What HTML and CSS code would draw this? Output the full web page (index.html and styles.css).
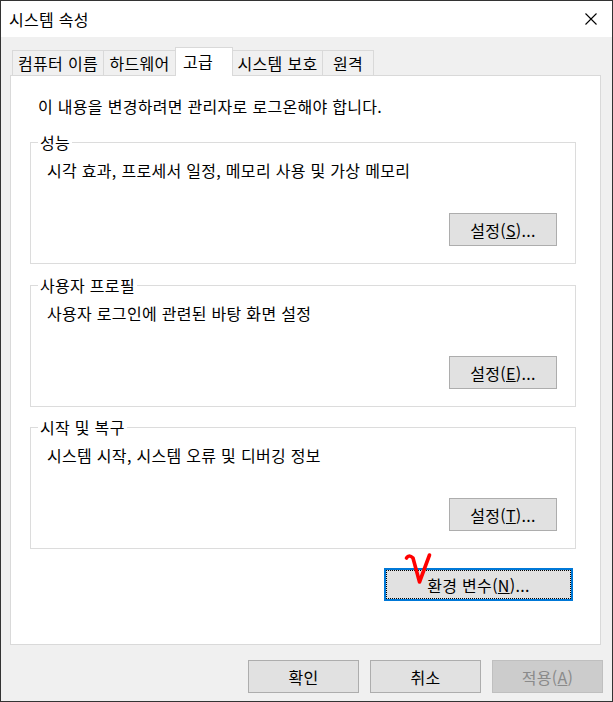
FILE: index.html
```html
<!DOCTYPE html>
<html lang="ko">
<head>
<meta charset="utf-8">
<title>시스템 속성</title>
<link rel="stylesheet" href="styles.css">
</head>
<body>
<div class="window">
  <div class="titlebar">
    <span class="title">시스템 속성</span>
    <svg class="close" width="12" height="12" viewBox="0 0 12 12"><path d="M0.5 0.5 L11.5 11.5 M11.5 0.5 L0.5 11.5" stroke="#000" stroke-width="1.1" fill="none"/></svg>
  </div>
  <div class="client">
    <div class="tabs">
      <div class="tab t1">컴퓨터 이름</div>
      <div class="tab t2">하드웨어</div>
      <div class="tab t3 active">고급</div>
      <div class="tab t4">시스템 보호</div>
      <div class="tab t5">원격</div>
    </div>
    <div class="panel">
      <div class="intro">이 내용을 변경하려면 관리자로 로그온해야 합니다.</div>
      <div class="group g1">
        <div class="group-title">성능</div>
        <div class="group-desc">시각 효과, 프로세서 일정, 메모리 사용 및 가상 메모리</div>
        <div class="group-actions"><button class="btn btn-set">설정(<u>S</u>)...</button></div>
      </div>
      <div class="group g2">
        <div class="group-title">사용자 프로필</div>
        <div class="group-desc">사용자 로그인에 관련된 바탕 화면 설정</div>
        <div class="group-actions"><button class="btn btn-set">설정(<u>E</u>)...</button></div>
      </div>
      <div class="group g3">
        <div class="group-title">시작 및 복구</div>
        <div class="group-desc">시스템 시작, 시스템 오류 및 디버깅 정보</div>
        <div class="group-actions"><button class="btn btn-set">설정(<u>T</u>)...</button></div>
      </div>
      <div class="env-row">
        <button class="btn btn-default"><span class="focus">환경 변수(<u>N</u>)...</span></button>
        <svg class="mark" width="32" height="36" viewBox="0 0 32 36"><path d="M4.5 8 Q7 4 11 8 L17.5 32 L27.5 5" stroke="#ff0000" stroke-width="3.6" fill="none" stroke-linecap="round" stroke-linejoin="round"/></svg>
      </div>
    </div>
    <div class="footer">
      <button class="btn btn-foot">확인</button>
      <button class="btn btn-foot">취소</button>
      <button class="btn btn-foot disabled">적용(<u>A</u>)</button>
    </div>
  </div>
</div>
</body>
</html>
```
FILE: styles.css
```css
html, body {
  margin: 0;
  padding: 0;
  background: #f0f0f0;
}

.window {
  width: 613px;
  height: 702px;
  box-sizing: border-box;
  border: 1px solid #333333;
  display: flex;
  flex-direction: column;
  font-family: "Noto Sans CJK KR", "Malgun Gothic", sans-serif;
  font-size: 16px;
  letter-spacing: 0.3px;
  color: #000;
  background: #f0f0f0;
}

.titlebar {
  height: 36px;
  flex: none;
  background: #ffffff;
  display: flex;
  align-items: center;
  justify-content: space-between;
  padding-left: 8px;
  line-height: 20px;
}

.close {
  margin-right: 15px;
}

.client {
  flex: 1;
  display: flex;
  flex-direction: column;
  padding-top: 10px;
}

.tabs {
  display: flex;
  align-items: flex-end;
  height: 28px;
  margin-left: 11px;
  position: relative;
  z-index: 1;
}

.tab {
  box-sizing: border-box;
  height: 25px;
  border: 1px solid #d9d9d9;
  border-bottom: 0;
  margin-left: -1px;
  text-align: center;
  line-height: 24px;
  background: #f0f0f0;
  white-space: nowrap;
}

.tab.t1 { margin-left: 0; width: 92px; }
.tab.t2 { width: 73px; }
.tab.t3 { width: 58px; }
.tab.t4 { width: 91px; }
.tab.t5 { width: 52px; }

.tab.active {
  height: 29px;
  margin-bottom: -1px;
  background: #ffffff;
  text-align: left;
  padding-left: 7px;
  padding-top: 1px;
}

.panel {
  background: #ffffff;
  border: 1px solid #d9d9d9;
  margin: 0 11px 0 9px;
  padding: 20px 24px 43px 19px;
}

.intro {
  line-height: 20px;
  margin-left: 8px;
}

.group {
  border: 1px solid #dcdcdc;
}

.group.g1 { margin-top: 26px; }
.group.g2 { margin-top: 21px; }
.group.g3 { margin-top: 20px; }

.group-title {
  margin-top: -11px;
  margin-left: 7px;
  padding: 0 2px;
  width: fit-content;
  background: #ffffff;
  line-height: 20px;
}

.group-desc {
  margin: 8px 0 0 16px;
  line-height: 20px;
}

.group-actions {
  display: flex;
  justify-content: flex-end;
  margin: 33px 18px 17px 0;
}

.btn {
  box-sizing: border-box;
  height: 33px;
  padding: 0;
  border: 1px solid #adadad;
  background: #e1e1e1;
  color: #000;
  font: inherit;
  letter-spacing: inherit;
  line-height: 20px;
  display: flex;
  align-items: center;
  justify-content: center;
  white-space: nowrap;
}

.btn u {
  text-underline-offset: 1px;
}

.btn-set {
  width: 108px;
}

.env-row {
  display: flex;
  justify-content: flex-end;
  margin-top: 19px;
  padding-right: 3px;
  position: relative;
}

.btn-default {
  width: 189px;
  border: 2px solid #0078d7;
  align-items: stretch;
}

.focus {
  flex: 1;
  border: 1px dotted #000;
  display: flex;
  align-items: center;
  justify-content: center;
}

.mark {
  position: absolute;
  left: 372px;
  top: -18px;
}

.footer {
  display: flex;
  justify-content: flex-end;
  gap: 11px;
  padding: 15px 9px 0 0;
}

.btn-foot {
  width: 111px;
}

.btn-foot.disabled {
  background: #cccccc;
  border-color: #bfbfbf;
  color: #8a8a8a;
}
```
